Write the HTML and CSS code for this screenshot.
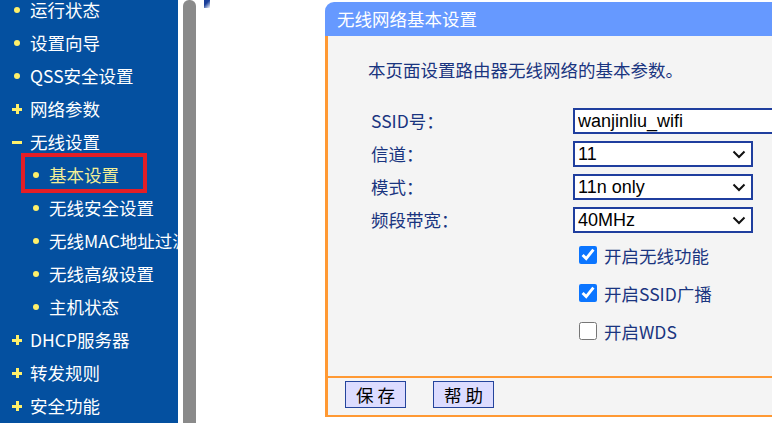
FILE: index.html
```html
<!DOCTYPE html>
<html lang="zh-CN">
<head>
    <meta charset="UTF-8">
    <title>无线网络基本设置</title>
    <link rel="stylesheet" href="styles.css">
</head>
<body>
    <!-- left menu frame -->
    <nav class="menu">
        <ul class="menu-list">
            <li class="item"><span class="ico ico-dot"></span>运行状态</li>
            <li class="item"><span class="ico ico-dot"></span>设置向导</li>
            <li class="item"><span class="ico ico-dot"></span>QSS安全设置</li>
            <li class="item"><span class="ico ico-plus"></span>网络参数</li>
            <li class="item"><span class="ico ico-minus"></span>无线设置</li>
            <li class="item sub active"><span class="ico ico-dot"></span>基本设置</li>
            <li class="item sub"><span class="ico ico-dot"></span>无线安全设置</li>
            <li class="item sub"><span class="ico ico-dot"></span>无线MAC地址过滤</li>
            <li class="item sub"><span class="ico ico-dot"></span>无线高级设置</li>
            <li class="item sub"><span class="ico ico-dot"></span>主机状态</li>
            <li class="item"><span class="ico ico-plus"></span>DHCP服务器</li>
            <li class="item"><span class="ico ico-plus"></span>转发规则</li>
            <li class="item"><span class="ico ico-plus"></span>安全功能</li>
        </ul>
    </nav>

    <div class="scrollbar"><div class="thumb"></div></div>

    <!-- main frame -->
    <main class="frame">
        <div class="corner-pic"></div>
        <section class="panel">
            <div class="panel-head">无线网络基本设置</div>
            <div class="panel-body">
                <p class="intro">本页面设置路由器无线网络的基本参数。</p>
                <div class="fields">
                    <label class="field-label">SSID号：</label>
                    <input class="text-input" type="text" value="wanjinliu_wifi">

                    <label class="field-label">信道：</label>
                    <div class="select">
                        <span class="select-value">11</span>
                        <svg class="chevron" width="14" height="9" viewBox="0 0 14 9"><path d="M1.5 1.5 L7 7 L12.5 1.5" fill="none" stroke="#111" stroke-width="2"/></svg>
                    </div>

                    <label class="field-label">模式：</label>
                    <div class="select">
                        <span class="select-value">11n only</span>
                        <svg class="chevron" width="14" height="9" viewBox="0 0 14 9"><path d="M1.5 1.5 L7 7 L12.5 1.5" fill="none" stroke="#111" stroke-width="2"/></svg>
                    </div>

                    <label class="field-label">频段带宽：</label>
                    <div class="select">
                        <span class="select-value">40MHz</span>
                        <svg class="chevron" width="14" height="9" viewBox="0 0 14 9"><path d="M1.5 1.5 L7 7 L12.5 1.5" fill="none" stroke="#111" stroke-width="2"/></svg>
                    </div>
                </div>

                <div class="switches">
                    <label class="switch"><input type="checkbox" checked>开启无线功能</label>
                    <label class="switch"><input type="checkbox" checked>开启SSID广播</label>
                    <label class="switch"><input type="checkbox">开启WDS</label>
                </div>
            </div>
            <div class="panel-foot">
                <button class="btn" type="button">保 存</button>
                <button class="btn" type="button">帮 助</button>
            </div>
        </section>
    </main>
</body>
</html>
```

FILE: styles.css
```css
/* router admin page */
body {
    margin: 0;
    height: 423px;
    overflow: hidden;
    display: flex;
    background-color: #fff;
    font-family: "Noto Sans CJK SC", "Liberation Sans", sans-serif;
}

/* left menu */
.menu {
    width: 178px;
    flex: none;
    background-color: #0450a0;
    overflow: hidden;
}

.menu-list {
    list-style: none;
    margin: -7px 0 0 0;
    padding: 0;
}

.item {
    position: relative;
    display: flex;
    align-items: center;
    height: 33px;
    padding-left: 12px;
    gap: 8px;
    color: #fff;
    font-size: 17.5px;
    white-space: nowrap;
}

.item.sub {
    padding-left: 31px;
}

.item.active {
    color: #f2ee96;
}

/* red mark round the selected entry */
.item.active::after {
    content: "";
    position: absolute;
    left: 21px;
    top: -5px;
    width: 118px;
    height: 32px;
    border: 4px solid #e41e26;
}

.ico {
    flex: none;
    position: relative;
    width: 10px;
    height: 10px;
}

.ico-dot::before {
    content: "";
    position: absolute;
    left: 2px;
    top: 2px;
    width: 6px;
    height: 6px;
    border-radius: 50%;
    background-color: #fff06a;
}

.ico-plus::before,
.ico-minus::before {
    content: "";
    position: absolute;
    left: 0;
    top: 4px;
    width: 10px;
    height: 3px;
    background-color: #fff06a;
}

.ico-plus::after {
    content: "";
    position: absolute;
    left: 3.5px;
    top: 0.5px;
    width: 3px;
    height: 10px;
    background-color: #fff06a;
}

/* frame scrollbar */
.scrollbar {
    width: 22px;
    flex: none;
    padding-left: 5px;
    box-sizing: border-box;
}

.thumb {
    width: 13px;
    height: 100%;
    background-color: #8a8a8a;
    border-radius: 6px 6px 0 0;
}

/* main frame */
.frame {
    position: relative;
    flex: none;
    width: 600px;
    padding-left: 125px;
}

.corner-pic {
    position: absolute;
    left: 4px;
    top: 0;
    width: 6px;
    height: 8px;
    background: linear-gradient(135deg, #1a3f9a 40%, #ffffff 100%);
}

.panel {
    width: 500px;
    margin-top: 2px;
}

.panel-head {
    height: 34px;
    line-height: 34px;
    padding-left: 12px;
    background-color: #6699ff;
    color: #fff;
    font-size: 17.5px;
    border-top-left-radius: 9px;
}

.panel-body {
    height: 340px;
    box-sizing: border-box;
    background-color: #f4f4f4;
    border-left: 3px solid #ff9933;
    padding-top: 22px;
    color: #1a3580;
    font-size: 17.5px;
}

.intro {
    margin: 0 0 26px 40px;
    line-height: 24px;
}

.fields {
    display: grid;
    grid-template-columns: 202px 230px;
    row-gap: 7px;
    padding-left: 43px;
}

.field-label {
    line-height: 26px;
}

.text-input,
.select {
    height: 26px;
    box-sizing: border-box;
    border: 2px solid #1f3e9e;
    background-color: #fff;
    font-family: "Liberation Sans", Arial, sans-serif;
    font-size: 18px;
    color: #000;
}

.text-input {
    width: 230px;
    padding: 0 3px;
    margin: 0;
    outline: none;
}

.select {
    position: relative;
    width: 180px;
    display: flex;
    align-items: center;
    padding-left: 3px;
}

.chevron {
    position: absolute;
    right: 5px;
    top: 7px;
}

.switches {
    margin: 3px 0 0 251px;
}

.switch {
    display: flex;
    align-items: center;
    gap: 7px;
    height: 38px;
}

.switch input {
    width: 18px;
    height: 18px;
    margin: 0;
    accent-color: #0b75ff;
}

.panel-foot {
    height: 37px;
    box-sizing: content-box;
    background-color: #f4f4f4;
    border-left: 3px solid #ff9933;
    border-top: 2px solid #ff9933;
    border-bottom: 2px solid #ff9933;
    padding-left: 17px;
    display: flex;
    gap: 27px;
    align-items: flex-start;
}

.btn {
    margin-top: 3px;
    width: 61px;
    height: 27px;
    padding: 0;
    background-color: #dcdcff;
    border: 1.5px solid #24449c;
    font-family: "Noto Sans CJK SC", sans-serif;
    font-size: 17.5px;
    line-height: 22px;
    color: #000;
}
```
